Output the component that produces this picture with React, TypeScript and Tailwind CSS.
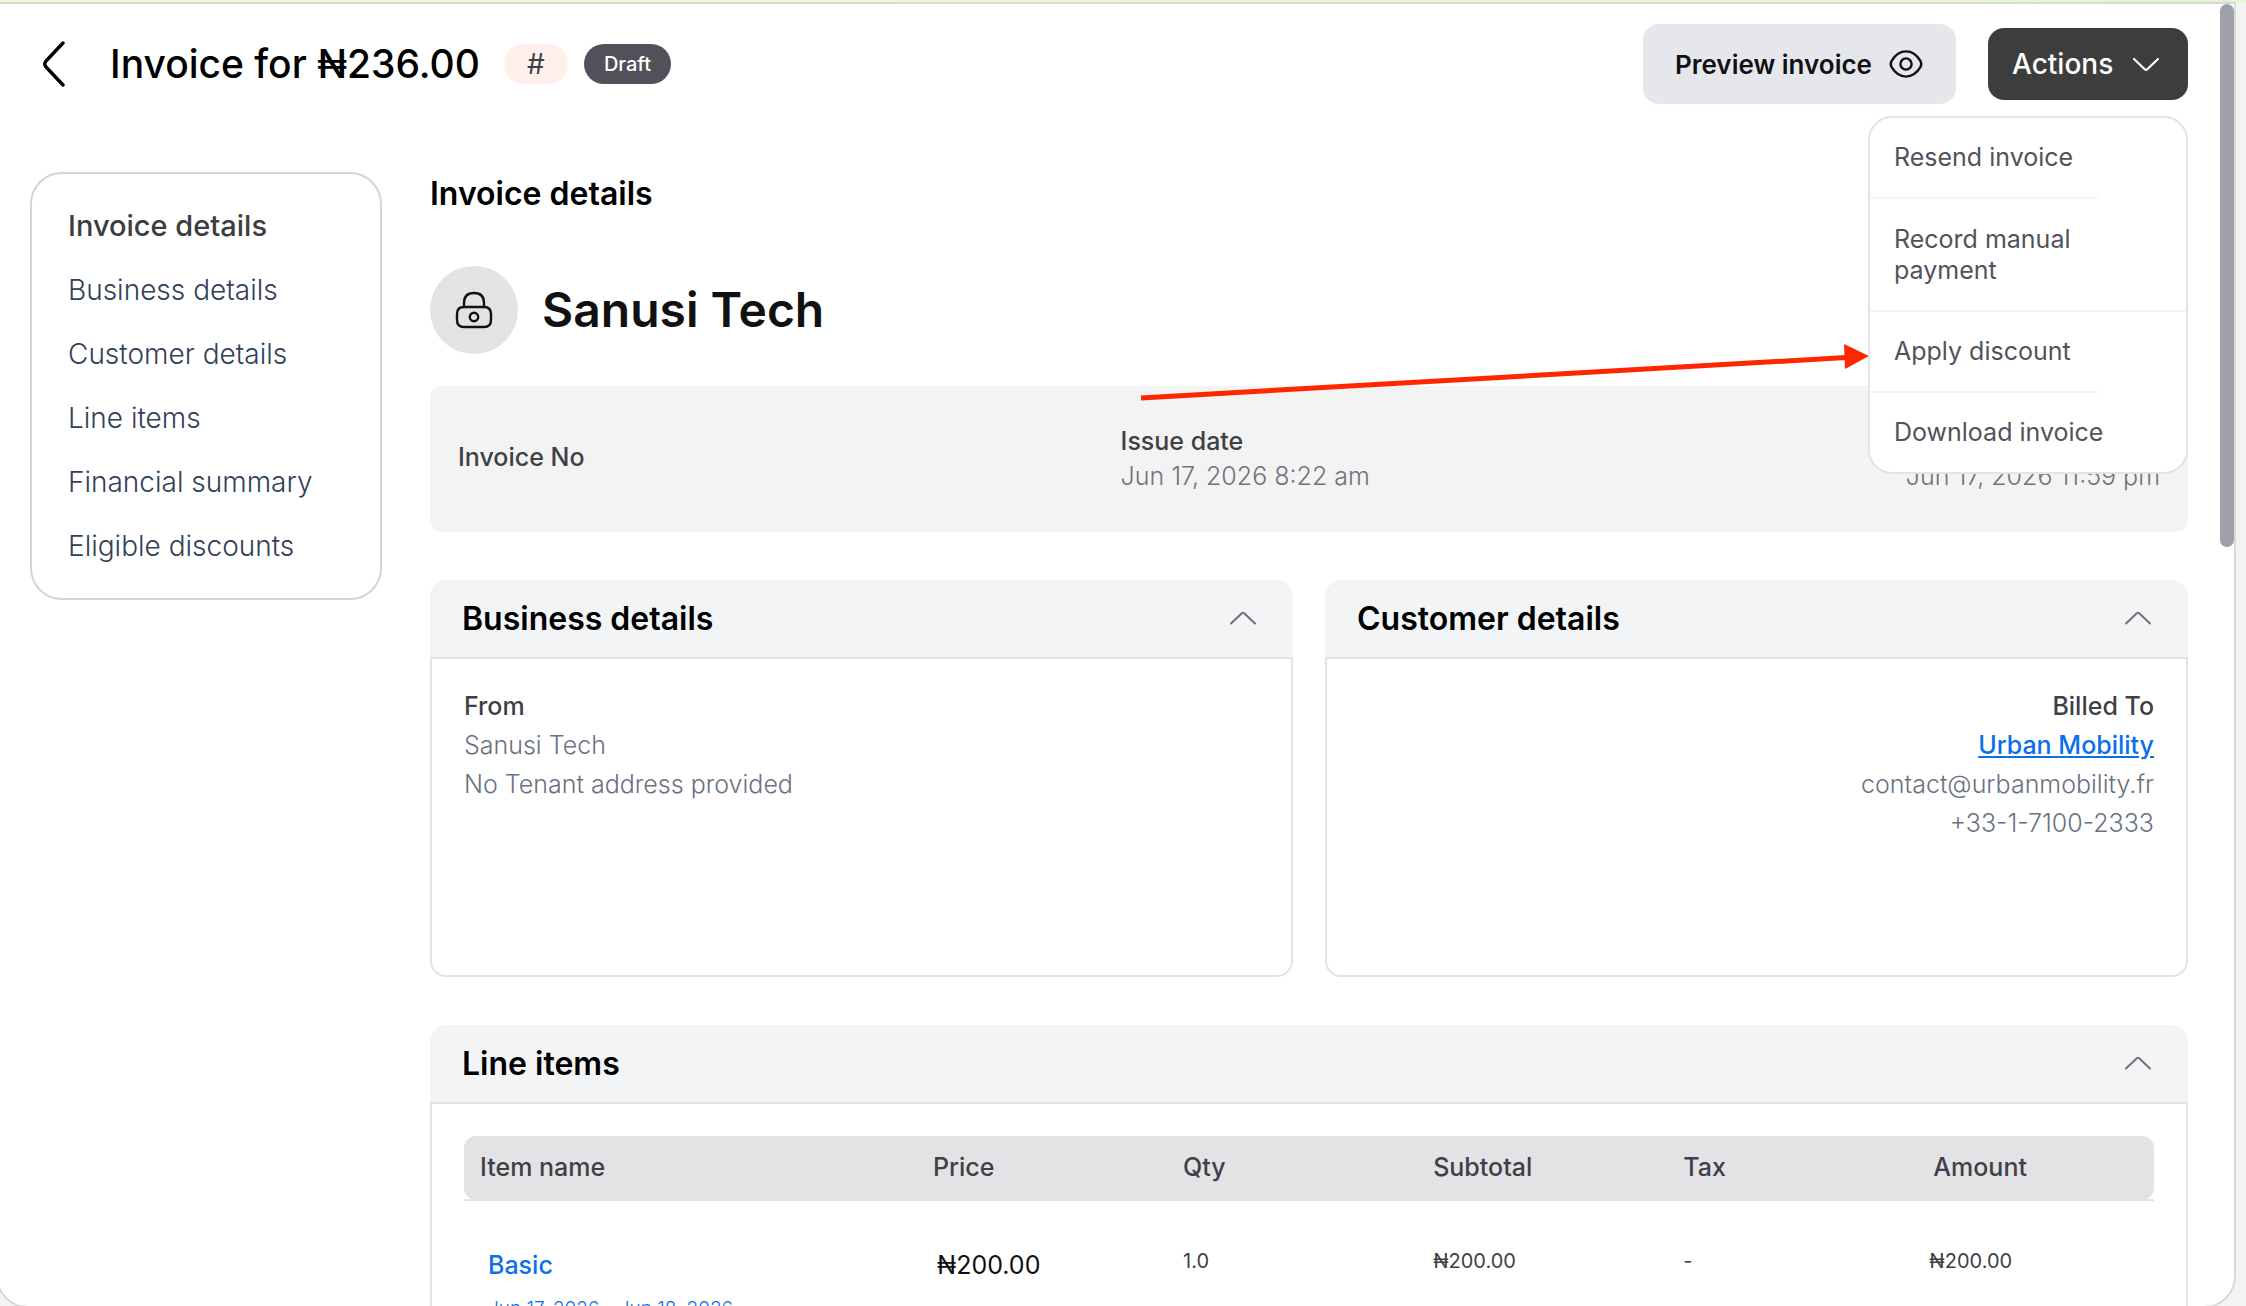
import { useState } from "react";

interface NavItem {
  id: string;
  label: string;
}

interface LineItem {
  name: string;
  period: string;
  price: string;
  qty: string;
  subtotal: string;
  tax: string;
  amount: string;
}

const navItems: NavItem[] = [
  { id: "invoice-details", label: "Invoice details" },
  { id: "business-details", label: "Business details" },
  { id: "customer-details", label: "Customer details" },
  { id: "line-items", label: "Line items" },
  { id: "financial-summary", label: "Financial summary" },
  { id: "eligible-discounts", label: "Eligible discounts" },
];

const lineItems: LineItem[] = [
  {
    name: "Basic",
    period: "Jun 17, 2026 - Jun 18, 2026",
    price: "₦200.00",
    qty: "1.0",
    subtotal: "₦200.00",
    tax: "-",
    amount: "₦200.00",
  },
];

const ChevronUp = () => (
  <svg width="28" height="16" viewBox="0 0 28 16" fill="none" stroke="currentColor" strokeWidth="2" strokeLinecap="round" strokeLinejoin="round">
    <path d="M2 12.500 L12.800 2.300 Q14 1.300 15.200 2.300 L26 12.500" />
  </svg>
);

const EyeIcon = () => (
  <svg width="36" height="32" viewBox="0 0 36 32" fill="none" stroke="currentColor" strokeWidth="2.4" strokeLinejoin="round">
    <path d="M18 3.400 C24 3.400 29 7.200 32.400 12.800 Q34.200 16 32.400 19.200 C29 24.800 24 28.600 18 28.600 C12 28.600 7 24.800 3.600 19.200 Q1.800 16 3.600 12.800 C7 7.200 12 3.400 18 3.400 Z" />
    <circle cx="18" cy="16" r="5.600" />
  </svg>
);

const LockIcon = () => (
  <svg width="40" height="40" viewBox="0 0 40 40" fill="none" stroke="currentColor" strokeWidth="2.4">
    <path d="M10 17 V13 C10 6.500 13 3 20 3 C27 3 30 6.500 30 13 V17" strokeLinecap="round" />
    <path d="M10 17 H30 C35 17 37 19 37 24 V30 C37 35 35 37 30 37 H10 C5 37 3 35 3 30 V24 C3 19 5 17 10 17 Z" />
    <circle cx="20" cy="27" r="4.200" />
  </svg>
);

const Card = ({ id, title, children }: { id: string; title: string; children: React.ReactNode }) => {
  const [open, setOpen] = useState(true);

  return (
    <section id={id} className="min-w-0 flex-1">
      <button
        onClick={() => setOpen(!open)}
        className="flex h-[77px] w-full items-center justify-between rounded-t-2xl bg-gray-100 pl-8 pr-9 text-left text-[32px] font-semibold text-black"
      >
        {title}
        <span className="text-zinc-500">
          <ChevronUp />
        </span>
      </button>
      {open && (
        <div className="min-h-[320px] rounded-b-2xl border-2 border-[#e3e3e5] px-8">{children}</div>
      )}
    </section>
  );
};

const ActionsMenu = () => (
  <div className="absolute right-0 top-full z-10 mt-4 w-[320px]">
    <div className="flex flex-col rounded-3xl border-2 border-[#e4e4e4] bg-white text-[25px] leading-[31px] text-zinc-600">
      <button className="w-[228px] border-b-2 border-zinc-100 px-6 py-6 text-left">Resend invoice</button>
      <button className="border-b-2 border-zinc-100 px-6 pb-6 pt-[25px] text-left">Record manual payment</button>
      <button className="w-[228px] border-b-2 border-zinc-100 px-6 py-6 text-left">Apply discount</button>
      <button className="px-6 py-6 text-left">Download invoice</button>
    </div>
    {/* pointer to "Apply discount" */}
    <svg className="absolute right-full top-56" width="730" height="64" viewBox="0 0 730 64">
      <path d="M3 58 L708 17.500" stroke="#ff2600" strokeWidth="5" />
      <path d="M706 4 L731 16 L707 29 Z" fill="#ff2600" />
    </svg>
  </div>
);

const Header = () => {
  const [menuOpen, setMenuOpen] = useState(true);

  return (
    <header className="flex h-20 items-center justify-between">
      <div className="flex items-center">
        <button aria-label="Back" className="flex w-20 justify-start pl-3">
          <svg width="24" height="50" viewBox="0 0 24 50" fill="none" stroke="black" strokeWidth="3.400" strokeLinecap="round" strokeLinejoin="round">
            <path d="M21 4 L4 22 Q1.500 25 4 28 L21 46" />
          </svg>
        </button>
        <h1 className="text-[39px] font-medium text-black">Invoice for ₦236.00</h1>
        <span className="ml-6 flex h-10 w-16 items-center justify-center rounded-full bg-[#fff0eb] text-[28px] text-zinc-700">#</span>
        <span className="ml-4 flex h-10 items-center rounded-full bg-[#52515b] px-5 text-[20px] font-medium text-white">Draft</span>
      </div>
      <div className="flex items-center gap-8">
        <button className="flex h-20 items-center gap-4 rounded-2xl bg-[#e6e7ed] px-8 text-[26px] font-semibold text-[#111]">
          Preview invoice
          <EyeIcon />
        </button>
        <div className="relative">
          <button
            onClick={() => setMenuOpen(!menuOpen)}
            className="flex h-[72px] w-[200px] items-center justify-between rounded-2xl bg-[#3d3d3d] px-6 text-[28px] font-medium text-white"
          >
            Actions
            <svg width="34" height="20" viewBox="0 0 34 20" fill="none" stroke="currentColor" strokeWidth="2.200" strokeLinecap="round" strokeLinejoin="round">
              <path d="M4 5 L15 15.500 Q16 16.300 17 15.500 L28 5" />
            </svg>
          </button>
          {menuOpen && <ActionsMenu />}
        </div>
      </div>
    </header>
  );
};

export default function App() {
  return (
    <div className="flex h-screen flex-col overflow-hidden bg-[#f3f3f3] pr-[10px] font-['Inter',sans-serif]">
      <div className="-mr-[10px] h-0.5 shrink-0 bg-gradient-to-r from-[#f0fada] to-[#dff5d3]" />
      <div className="-mb-0.5 -ml-1 flex min-h-0 flex-1 overflow-hidden rounded-b-[32px] border-2 border-[#d9d9db] bg-white">
        <div className="min-w-0 flex-1 overflow-hidden pl-8 pr-8 pt-5">
          <Header />
          <div className="mt-[68px] flex items-start gap-12">
            <nav className="flex w-[352px] shrink-0 flex-col gap-8 rounded-[32px] border-2 border-zinc-300 p-9 text-[28px] leading-8">
              {navItems.map((item, i) => (
                <a key={item.id} href={`#${item.id}`} className={i === 0 ? "text-[29px] font-medium leading-8 text-[#3d3d3d]" : "font-light text-slate-700"}>
                  {item.label}
                </a>
              ))}
            </nav>

            <main className="min-w-0 flex-1">
              <h2 id="invoice-details" className="text-[32px] font-semibold leading-[44px] text-black">
                Invoice details
              </h2>
              <div className="mt-[50px] flex items-center gap-6">
                <span className="flex h-[88px] w-[88px] items-center justify-center rounded-full bg-[#e3e3e5] text-[#111]">
                  <LockIcon />
                </span>
                <p className="text-[48px] font-semibold leading-none text-[#111]">Sanusi Tech</p>
              </div>

              <dl className="mt-8 flex h-[146px] items-center justify-between rounded-xl bg-[#f3f3f3] px-7 text-[25px] leading-[35px]">
                <div className="pb-1">
                  <dt className="font-medium text-zinc-700">Invoice No</dt>
                </div>
                <div>
                  <dt className="font-medium text-zinc-700">Issue date</dt>
                  <dd className="font-light text-zinc-500">Jun 17, 2026 8:22 am</dd>
                </div>
                <div>
                  <dt className="font-medium text-zinc-700">Due date</dt>
                  <dd className="font-light text-zinc-500">Jun 17, 2026 11:59 pm</dd>
                </div>
              </dl>

              <div className="mt-12 flex gap-8">
                <Card id="business-details" title="Business details">
                  <div className="pt-7 text-[25px] font-light leading-[39px] text-gray-500">
                    <p className="font-medium text-zinc-700">From</p>
                    <p>Sanusi Tech</p>
                    <p>No Tenant address provided</p>
                  </div>
                </Card>
                <Card id="customer-details" title="Customer details">
                  <div className="pt-7 text-right text-[25px] font-light leading-[39px] text-gray-500">
                    <p className="font-medium text-zinc-700">Billed To</p>
                    <p>
                      <a href="#customer-details" className="font-medium text-[#0b6fec] underline">Urban Mobility</a>
                    </p>
                    <p>contact@urbanmobility.fr</p>
                    <p>+33-1-7100-2333</p>
                  </div>
                </Card>
              </div>

              <div className="mt-12 flex">
                <Card id="line-items" title="Line items">
                  <table className="mt-8 w-full table-fixed text-left text-[20px] text-zinc-700">
                    <colgroup>
                      <col className="w-[26.8%]" />
                      <col className="w-[14.8%]" />
                      <col className="w-[14.8%]" />
                      <col className="w-[14.8%]" />
                      <col className="w-[14.8%]" />
                      <col />
                    </colgroup>
                    <thead className="border-b-2 border-[#e3e3e5] text-[25px]">
                      <tr className="h-16">
                        <th className="rounded-l-xl bg-[#e3e3e5] px-4 font-medium">Item name</th>
                        <th className="bg-[#e3e3e5] px-4 font-medium">Price</th>
                        <th className="bg-[#e3e3e5] px-4 font-medium">Qty</th>
                        <th className="bg-[#e3e3e5] px-4 font-medium">Subtotal</th>
                        <th className="bg-[#e3e3e5] px-4 font-medium">Tax</th>
                        <th className="rounded-r-xl bg-[#e3e3e5] px-4 font-medium">Amount</th>
                      </tr>
                    </thead>
                    <tbody>
                      {lineItems.map((item) => (
                        <tr key={item.name} className="align-top leading-8">
                          <td className="pl-6 pt-12 text-[#0b6fec]">
                            <a href="#line-items" className="text-[25px] font-medium">{item.name}</a>
                            <p className="mt-[10px] text-[19px] font-light">{item.period}</p>
                          </td>
                          <td className="pl-5 pt-12 text-[25px] text-[#111]">{item.price}</td>
                          <td className="pl-4 pt-11">{item.qty}</td>
                          <td className="pl-4 pt-11">{item.subtotal}</td>
                          <td className="pl-4 pt-11">{item.tax}</td>
                          <td className="pl-3 pt-11">{item.amount}</td>
                        </tr>
                      ))}
                    </tbody>
                  </table>
                </Card>
              </div>
            </main>
          </div>
        </div>
        {/* scrollbar thumb */}
        <div className="h-[543px] w-[14px] shrink-0 rounded-full bg-[#a0a0aa]" />
      </div>
    </div>
  );
}
